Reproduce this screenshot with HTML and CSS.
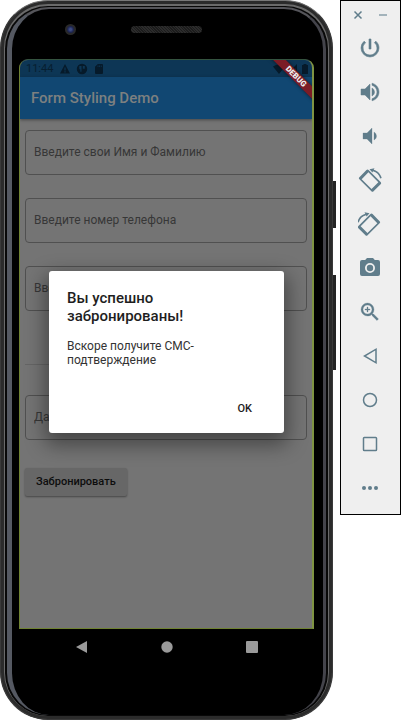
FILE: index.html
```html
<!DOCTYPE html>
<html lang="ru">
<head>
<meta charset="utf-8">
<meta name="viewport" content="width=device-width, initial-scale=1">
<title>Form Styling Demo</title>
<link rel="stylesheet" href="styles.css">
</head>
<body>
<main class="phone">
  <div class="bezel">
    <div class="bezel-top"><span class="camera"></span><span class="speaker"></span></div>
    <div class="screen">
      <div class="status">
        <span class="time">11:44</span>
        <svg class="s-icon" viewBox="0 0 12 12"><path fill-rule="evenodd" d="M6 1 11 10.500H1zM5.400 4.500v3h1.200v-3zM5.400 8.300v1.200h1.200V8.300z"/></svg>
        <svg class="s-icon" viewBox="0 0 12 12"><path fill-rule="evenodd" d="M6 .8a5.200 5.200 0 1 0 0 10.400A5.200 5.200 0 0 0 6 .8zM3.300 3h2.200v5.800H4.300V6.200h-1zM6.800 3h2v2.800h-2z"/></svg>
        <svg class="s-icon" viewBox="0 0 12 12"><path fill-rule="evenodd" d="M4.800 1H9q1 0 1 1v8q0 1-1 1H3q-1 0-1-1V3.800zM4.600 2.500v1.500h.8V2.500zM6.200 2.500v1.500h.8V2.500zM7.800 2.500v1.500h.8V2.500z"/></svg>
        <span class="grow"></span>
        <svg class="s-icon" viewBox="0 0 12 12"><path d="M0 3.500Q6-.5 12 3.500L6 11z"/></svg>
        <svg class="s-icon" viewBox="0 0 12 12"><path fill-rule="evenodd" d="M1 11 11 1v10zM8 6.500V10h1.500V5z"/></svg>
        <svg class="s-icon" viewBox="0 0 12 12"><path d="M4.500 1h3v1H9v9H3V2h1.500z"/></svg>
      </div>
      <header class="appbar"><h1>Form Styling Demo</h1></header>
      <form class="form">
        <input class="field" type="text" aria-label="Имя и Фамилия" placeholder="Введите свои Имя и Фамилию">
        <input class="field" type="tel" aria-label="Номер телефона" placeholder="Введите номер телефона">
        <input class="field" type="text" aria-label="Данные" placeholder="Введите">
        <div class="underline"></div>
        <input class="field" type="text" aria-label="Дата" placeholder="Дата">
        <button class="submit" type="button">Забронировать</button>
      </form>
      <div class="ribbon-clip"><span class="ribbon">DEBUG</span></div>
      <div class="overlay">
        <section class="dialog" role="dialog" aria-labelledby="dialog-title">
          <h2 id="dialog-title">Вы успешно забронированы!</h2>
          <p>Вскоре получите СМС-подтверждение</p>
          <button class="ok" type="button">OK</button>
        </section>
      </div>
    </div>
    <nav class="nav">
      <button type="button" aria-label="Назад"><svg viewBox="0 0 24 24"><path d="M17 6v12L6 12z"/></svg></button>
      <button type="button" aria-label="Домой"><svg viewBox="0 0 24 24"><circle cx="12" cy="12" r="5.700"/></svg></button>
      <button type="button" aria-label="Обзор"><svg viewBox="0 0 24 24"><rect x="6" y="6" width="12" height="12" rx="1"/></svg></button>
    </nav>
  </div>
</main>
<aside class="tools">
  <div class="window-buttons">
    <button type="button" aria-label="Close"><svg viewBox="0 0 10 10"><path d="M1.500 1.500l7 7m0-7l-7 7" fill="none" stroke="#607d8b" stroke-width="1.500"/></svg></button>
    <button type="button" aria-label="Minimize"><svg viewBox="0 0 10 10"><path d="M1 5h8" fill="none" stroke="#a3b3bb" stroke-width="2"/></svg></button>
  </div>
  <button class="tool" type="button" aria-label="Power"><svg viewBox="0 0 24 24"><path d="M13 3h-2v10h2V3zm4.830 2.170-1.420 1.420A6.920 6.920 0 0 1 19 12c0 3.870-3.130 7-7 7A6.995 6.995 0 0 1 7.580 6.580L6.170 5.170A8.932 8.932 0 0 0 3 12a9 9 0 0 0 18 0c0-2.740-1.230-5.180-3.170-6.830z" stroke="#607d8b" stroke-width=".6"/></svg></button>
  <button class="tool" type="button" aria-label="Volume up"><svg viewBox="0 0 24 24"><path d="M3 9v6h4l5 5V4L7 9H3zm13.500 3A4.500 4.500 0 0 0 14 7.970v8.050c1.480-.73 2.500-2.250 2.500-4.020zM14 3.230v2.060c2.890.86 5 3.540 5 6.710s-2.110 5.850-5 6.710v2.060c4.010-.91 7-4.490 7-8.770s-2.990-7.860-7-8.770z" stroke="#607d8b" stroke-width=".5"/></svg></button>
  <button class="tool" type="button" aria-label="Volume down"><svg viewBox="0 0 24 24"><path d="M18.500 12A4.500 4.500 0 0 0 16 7.970v8.050c1.480-.73 2.500-2.250 2.500-4.020zM5 9v6h4l5 5V4L9 9H5z" stroke="#607d8b" stroke-width=".3"/></svg></button>
  <button class="tool" type="button" aria-label="Rotate left"><svg viewBox="0 0 24 24"><path fill-rule="evenodd" transform="translate(12 12.700) rotate(45)" d="M-8.500-6.500h17Q10-6.500 10-5V5q0 1.500-1.500 1.500h-17Q-10 6.500-10 5V-5q0-1.500 1.500-1.500zM-7-4.800v9.600H7v-9.600z"/><path d="M11.500 1.200 16.500.2l-.8 1.500c4 1 7 4.300 8 8.300l-1.500.5c-.9-3.700-3.700-6.500-7.200-7.300l-.6 1.300z"/></svg></button>
  <button class="tool" type="button" aria-label="Rotate right"><svg viewBox="0 0 24 24"><g transform="translate(23 0) scale(-1 1)"><path fill-rule="evenodd" transform="translate(12 12.700) rotate(45)" d="M-8.500-6.500h17Q10-6.500 10-5V5q0 1.500-1.500 1.500h-17Q-10 6.500-10 5V-5q0-1.500 1.500-1.500zM-7-4.800v9.600H7v-9.600z"/><path d="M11.500 1.200 16.500.2l-.8 1.500c4 1 7 4.300 8 8.300l-1.500.5c-.9-3.700-3.700-6.500-7.200-7.300l-.6 1.300z"/></g></svg></button>
  <button class="tool" type="button" aria-label="Screenshot"><svg viewBox="0 0 24 24"><path fill-rule="evenodd" d="M9 2 7.170 4H4a2 2 0 0 0-2 2v12a2 2 0 0 0 2 2h16a2 2 0 0 0 2-2V6a2 2 0 0 0-2-2h-3.170L15 2H9zm3 15a5 5 0 1 1 0-10 5 5 0 0 1 0 10z"/><circle cx="12" cy="12" r="3.200"/></svg></button>
  <button class="tool" type="button" aria-label="Zoom"><svg viewBox="0 0 24 24"><path d="M15.500 14h-.79l-.28-.27A6.471 6.471 0 0 0 16 9.500 6.500 6.500 0 1 0 9.500 16c1.610 0 3.090-.59 4.230-1.570l.27.28v.79l5 4.990L20.490 19l-4.990-5zm-6 0C7.010 14 5 11.990 5 9.500S7.010 5 9.500 5 14 7.010 14 9.500 11.990 14 9.500 14zM12 10h-2v2H9v-2H7V9h2V7h1v2h2v1z" stroke="#607d8b" stroke-width=".3"/></svg></button>
  <button class="tool" type="button" aria-label="Back"><svg viewBox="0 0 24 24"><path class="line" d="M18 5.200v13.600L6.500 12z"/></svg></button>
  <button class="tool" type="button" aria-label="Home"><svg viewBox="0 0 24 24"><circle class="line" cx="12" cy="12" r="6.500"/></svg></button>
  <button class="tool" type="button" aria-label="Overview"><svg viewBox="0 0 24 24"><rect class="line" x="5.500" y="5.500" width="13" height="13" rx=".8"/></svg></button>
  <button class="tool" type="button" aria-label="More"><svg viewBox="0 0 24 24"><circle cx="6" cy="12" r="2"/><circle cx="12" cy="12" r="2"/><circle cx="18" cy="12" r="2"/></svg></button>
</aside>
</body>
</html>
```
FILE: styles.css
```css
* { box-sizing: border-box; }

body {
  margin: 0;
  min-height: 100vh;
  display: flex;
  align-items: flex-start;
  gap: 7px;
  background: #fff;
  font-family: Roboto, "Liberation Sans", sans-serif;
}

button {
  margin: 0;
  padding: 0;
  border: 0;
  background: none;
  font: inherit;
  color: inherit;
}

svg { display: block; }

h1, h2, p { margin: 0; }

/* Phone body */
.phone {
  position: relative;
  flex: 1;
  min-width: 0;
  min-height: 100vh;
  display: flex;
  padding: 6px 6px 4px 6px;
  border-radius: 48px;
  background: #080808;
  border: 1px solid #3a3a3a;
  border-top-color: #777;
  box-shadow: inset 0 0 0 3px #2b2b2b, inset 0 1px 0 4px #6a6a6a;
}

.phone::before,
.phone::after {
  content: "";
  position: absolute;
  right: -4px;
  width: 3px;
  background: #252525;
}

.phone::before { top: 180px; height: 47px; }
.phone::after { top: 274px; height: 95px; }

.bezel {
  flex: 1;
  min-width: 0;
  display: flex;
  flex-direction: column;
  padding: 0 9px 0 7px;
  border-radius: 42px;
  background: #000;
  border-style: solid;
  border-width: 2px 3px 0 5px;
  border-color: #55555a #44444b #222 #555962;
}

.bezel-top {
  height: 50px;
  display: flex;
  align-items: flex-start;
  padding: 15px 0 0 46px;
  gap: 55px;
}

.camera {
  width: 11px;
  height: 11px;
  border-radius: 50%;
  background: radial-gradient(circle, #3c4a80 0 1px, #1c2450 3px, #292929 4px);
}

.speaker {
  width: 71px;
  height: 7px;
  margin-top: 2px;
  border-radius: 4px;
  background: repeating-linear-gradient(45deg, #2c2c2c 0 1px, #1c1c1c 1px 2px);
}

/* Screen */
.screen {
  position: relative;
  flex: 1;
  display: flex;
  flex-direction: column;
  overflow: hidden;
  border: 1px solid #6f8232;
  border-right: 2px solid #7f9443;
  border-top-color: #34533f;
  border-radius: 9px 9px 0 0;
  background: #747474;
}

.status {
  height: 17px;
  display: flex;
  align-items: center;
  gap: 5px;
  padding: 0 1px 0 6px;
  background: #0d3655;
  color: #071e30;
  font-size: 11px;
  line-height: 16px;
}

.time { width: 28px; }
.s-icon { width: 12px; height: 12px; fill: #061a2a; }
.grow { flex: 1; }
.grow ~ .s-icon { margin-left: -4px; }

.appbar {
  height: 42px;
  padding: 0 11px;
  display: flex;
  align-items: center;
  background: #114772;
  box-shadow: 0 1px 3px #0006;
  color: #7d8080;
}

.appbar h1 {
  font-size: 15px;
  line-height: 18px;
  font-weight: 500;
}

.form {
  display: flex;
  flex-direction: column;
  align-items: flex-start;
  gap: 24px;
  padding: 11px 5px;
}

.field {
  width: 100%;
  height: 45px;
  margin-bottom: -1px;
  padding: 0 8px 2px;
  border: 1px solid #505050;
  border-radius: 4px;
  background: transparent;
  font: 12px/16px Roboto, "Liberation Sans", sans-serif;
  color: #333;
}

.field::placeholder { color: #373737; opacity: 1; }

.underline {
  width: 100px;
  height: 31px;
  margin-bottom: 6px;
  border-bottom: 1px solid #656565;
}

.submit {
  height: 28px;
  margin-top: 5px;
  padding: 0 11px;
  border-radius: 2px;
  background: #676767;
  box-shadow: 0 1px 2px #0006;
  font-size: 11px;
  line-height: 16px;
  font-weight: 500;
  color: #0d0d0d;
}

/* Corner ribbon */
.ribbon-clip {
  position: absolute;
  inset: 0;
  overflow: hidden;
  pointer-events: none;
}

.ribbon {
  position: absolute;
  top: 12px;
  right: -24px;
  width: 80px;
  height: 9px;
  transform: rotate(45deg);
  background: #7b1c26;
  box-shadow: 0 0 4px #0008;
  color: #eee;
  font-size: 8px;
  line-height: 9px;
  font-weight: 900;
  text-align: center;
}

/* Dialog */
.overlay {
  position: absolute;
  inset: 0;
  display: flex;
  align-items: center;
  padding: 16px 28px 0 29px;
}

.dialog {
  flex: 1;
  display: flex;
  flex-direction: column;
  padding: 18px;
  padding-bottom: 14px;
  border-radius: 3px;
  background: #fff;
  box-shadow: 0 8px 20px 4px #0006;
  color: #1e1e1e;
}

.dialog h2 {
  font-size: 15px;
  line-height: 18px;
  font-weight: 500;
}

.dialog p {
  margin-top: 14px;
  font-size: 12px;
  line-height: 14px;
  color: #333;
}

.ok {
  align-self: flex-end;
  margin-top: 32px;
  padding: 0 14px;
  font-size: 11px;
  line-height: 20px;
  font-weight: 500;
}

/* Android navigation */
.nav {
  height: 86px;
  display: flex;
  align-items: flex-start;
  justify-content: center;
  gap: 61px;
  padding-top: 6px;
}

.nav svg { width: 24px; height: 24px; fill: #9a9a9a; }

/* Emulator toolbar */
.tools {
  flex: 0 0 61px;
  display: flex;
  flex-direction: column;
  padding: 0 1px 4px 0;
  border: 1px solid #000;
  background: #efefef;
}

.window-buttons {
  height: 25px;
  display: flex;
  align-items: flex-end;
  justify-content: center;
  gap: 15px;
  padding-bottom: 6px;
}

.window-buttons svg { width: 10px; height: 10px; }

.tool {
  height: 44px;
  display: flex;
  align-items: center;
  justify-content: center;
}

.tool svg { width: 24px; height: 24px; fill: #607d8b; }
.tool .line { fill: none; stroke: #607d8b; stroke-width: 1.5px; }
```
